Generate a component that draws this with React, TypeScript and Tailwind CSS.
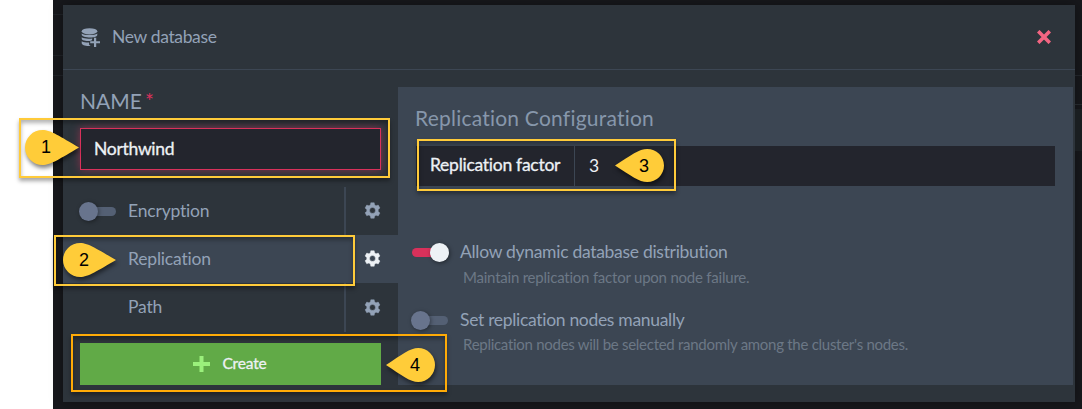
import React from "react";

function Gear({ className }: { className: string }) {
  return (
    <svg viewBox="0 0 24 24" className={className} fill="currentColor">
      <path fillRule="evenodd" d="M9.6 1h4.8l.7 3.2 1.9 1.1 3.1-1 2.4 4.2-2.4 2.2v2.6l2.4 2.2-2.4 4.2-3.1-1-1.9 1.1-.7 3.2H9.6l-.7-3.2L7 18.5l-3.1 1-2.4-4.2 2.4-2.2v-2.6L1.5 8.5l2.4-4.2 3.1 1 1.9-1.1zM12 7.800a4.1 4.1 0 1 0 0 8.200 4.1 4.1 0 0 0 0-8.200z" strokeWidth="0.6" stroke="currentColor" strokeLinejoin="round" />
    </svg>
  );
}

function DatabaseIcon() {
  return (
    <svg viewBox="0 0 19 19" className="h-[19px] w-[19px] shrink-0" fill="#93a2b7">
      <ellipse cx="8.5" cy="3.3" rx="7.8" ry="3.1" />
      <path d="M.7 5.4c2.800 2.200 12.800 2.200 15.600 0v1.300c0 1.800-3.200 2.800-6.800 2.800C4.600 9.500.7 8.500.7 6.500z" />
      <path d="M.7 9.200c2.300 1.500 6 1.700 10.600 1.200l-.3 1.800-2 .9C4.300 13.100.7 12.300.7 10.400z" />
      <path d="M.7 13.200c2 1.200 4.600 1.500 7.400 1.400v2.200l1.500 1.200C4.700 18.400.7 17.300.7 15.100z" />
      <path d="M13 9.800h2.200v3.500H19v2h-3.800V19H13v-3.700H9.200v-2H13z" />
    </svg>
  );
}

function Toggle({ on = false }: { on?: boolean }) {
  return (
    <span className={on ? "flex h-[19px] w-[37px] items-center justify-end rounded-full" : "flex h-[19px] w-[37px] items-center rounded-full"}>
      {on && <span className="-mr-2 h-[9px] w-[26px] rounded-full bg-[#d9315b]" />}
      <span className={on ? "z-10 h-[19px] w-[19px] rounded-full bg-[#edf1f5] shadow-[1px_1px_4px_rgba(0,0,0,0.45)]" : "z-10 h-[19px] w-[19px] rounded-full bg-[#68748d] shadow-[1px_1px_4px_rgba(0,0,0,0.4)]"} />
      {!on && <span className="-ml-2 h-[9px] w-[26px] rounded-full bg-[#546074]" />}
    </span>
  );
}

function Pin({ n, left = false, className }: { n: string; left?: boolean; className: string }) {
  return (
    <div className={`absolute ${className}`}>
      <svg viewBox="0 0 54 35" preserveAspectRatio="none" className="h-full w-full overflow-visible drop-shadow-[1px_3px_2px_rgba(0,0,0,0.5)]" fill="#ffcc39">
        <path
          transform={left ? "translate(54 0) scale(-1 1)" : undefined}
          d={left ? "M18.500 0C27.500 0 36 6.500 54 17.500C36 28.500 27.500 35 18.500 35A18.500 17.500 0 0 1 18.500 0Z" : "M17.500 0C26 0 35 6.500 54 17.500C35 28.500 26 35 17.500 35A17.500 17.500 0 0 1 17.500 0Z"}
        />
      </svg>
      <span className={`absolute top-0 font-['Liberation_Sans',sans-serif] text-[18px] leading-[35px] text-black ${left ? "right-[15px]" : "left-[16px]"}`}>{n}</span>
    </div>
  );
}

function Row({ label, active = false, toggle = false }: { label: string; active?: boolean; toggle?: boolean }) {
  return (
    <div className={active ? "flex h-12 bg-[#3c4653]" : "flex h-12 last:h-[49px]"}>
      <div className="flex flex-1 items-center pl-[16px]">
        <div className="w-[49px]">{toggle && <Toggle />}</div>
        <span className="text-[17.500px] tracking-[-0.180px] text-[#93a2b7] [font-variant-ligatures:none]">{label}</span>
      </div>
      <div className={active ? "flex w-[54px] items-center justify-center border-l-2 border-transparent text-[#edf1f5]" : "flex w-[54px] items-center justify-center border-l-2 border-[#3c4653] text-[#93a2b7]"}>
        <Gear className="mb-px ml-px h-[17px] w-[17px]" />
      </div>
    </div>
  );
}

export default function App() {
  return (
    <div className="relative h-[409px] w-[1082px] overflow-hidden bg-white pl-[53px] font-['Lato',sans-serif]">
      <div className="flex h-full bg-[#17181c]">
        <div className="flex w-[10px] shrink-0 flex-col">
          <div className="h-[15px] border-b border-[#202328]" />
          <div className="h-[41px] border-b border-[#202328]" />
          <div className="h-[20px] border-b border-[#202328]" />
        </div>
        <div className="mt-[5px] flex h-[397px] w-[1012px] shrink-0 flex-col bg-[#2d343b] shadow-[0_0_12px_rgba(0,0,0,0.35)]">
          <header className="flex h-[65px] items-center justify-between border-b border-[#3c4653] pr-[24px] pl-[18px]">
            <div className="flex items-center gap-[12px]">
              <DatabaseIcon />
              <span className="text-[17.500px] tracking-[-0.350px] text-[#93a2b7]">New database</span>
            </div>
            <svg viewBox="0 0 14 14" className="mb-px h-[14px] w-[14px]" stroke="#f36582" strokeWidth="3.600">
              <path d="M1.200 1.200 12.800 12.800M12.800 1.200 1.200 12.800" />
            </svg>
          </header>

          <div className="flex pt-[17px]">
            <aside className="flex w-[335px] flex-col">
              <div className="h-[41px] pl-[17px] text-[21px] leading-[28px] text-[#93a2b7]">
                NAME<span className="ml-[3px] text-[#d9315b]">*</span>
              </div>
              <div className="mr-[17px] ml-[17px] flex h-[42px] items-center border border-[#d9315b] bg-[#23252d] pl-[13px] text-[17.500px] tracking-[-0.300px] text-[#edf1f5] shadow-[0_0_8px_rgba(217,49,91,0.5)] [-webkit-text-stroke:0.3px_#edf1f5]">
                Northwind
              </div>
              <div className="mt-[17px]">
                <Row label="Encryption" toggle />
                <Row label="Replication" active />
                <Row label="Path" />
              </div>
              <button className="mt-[11px] ml-[17px] flex h-[42px] w-[301px] items-center justify-center gap-[12px] bg-[#61aa47] pr-px text-[15.500px] tracking-[-0.150px] text-[#edf1f5] [-webkit-text-stroke:0.3px_#edf1f5]">
                <svg viewBox="0 0 17 16" className="h-[16px] w-[17px]" fill="#9bf07c">
                  <path d="M6.500 0h4v6H17v4h-6.500v6h-4v-6H0V6h6.500z" />
                </svg>
                Create
              </button>
            </aside>

            <section className="h-[298px] w-[675px] bg-[#3c4653] pl-[14px]">
              <h2 className="pt-[16px] pl-[3px] text-[21px] leading-[30px] tracking-[0.220px] text-[#8797ab]">Replication Configuration</h2>
              <div className="mt-[13px] ml-[4px] flex h-[40px] w-[639px] items-center bg-[#23252d] text-[17.500px] text-[#edf1f5]">
                <span className="flex h-full w-[159px] items-center border-r border-[#3c4653] pb-[2px] pl-[14px] tracking-[-0.270px] [-webkit-text-stroke:0.3px_#edf1f5]">Replication factor</span>
                <span className="pl-[14px]">3</span>
              </div>
              <div className="mt-[56px] flex h-[20px] items-center gap-[11px] text-[17.500px] tracking-[-0.290px] text-[#93a2b7]">
                <Toggle on />
                Allow dynamic database distribution
              </div>
              <p className="mt-[5px] pl-[51px] text-[15px] leading-[20px] tracking-[-0.220px] text-[#6c7886]">Maintain replication factor upon node failure.</p>
              <div className="mt-[23px] flex h-[20px] items-center text-[17.500px] tracking-[-0.310px] text-[#93a2b7]">
                <span className="mr-[12px] -ml-px"><Toggle /></span>
                Set replication nodes manually
              </div>
              <p className="mt-[4px] pl-[51px] text-[15px] leading-[20px] tracking-[-0.280px] text-[#6c7886]">Replication nodes will be selected randomly among the cluster's nodes.</p>
            </section>
          </div>
        </div>
        <div className="flex flex-1 flex-col">
          <div className="h-[76px] border-b border-[#202328]" />
          <div className="h-[29px] border-b border-[#24282c]" />
          <div className="mt-[4px] h-[42px] bg-[#1a1e21]" />
        </div>
      </div>

      <div className="absolute top-[118px] left-[19px] h-[60px] w-[371px] border-2 border-[#ffcb3a] shadow-[0_3px_4px_rgba(0,0,0,0.35),inset_0_3px_4px_rgba(0,0,0,0.3)]" />
      <div className="absolute top-[235px] left-[54px] h-[51px] w-[301px] border-2 border-[#ffcb3a] shadow-[0_3px_4px_rgba(0,0,0,0.35),inset_0_3px_4px_rgba(0,0,0,0.3)]" />
      <div className="absolute top-[139px] left-[417px] h-[52px] w-[259px] border-2 border-[#ffcb3a] shadow-[0_3px_4px_rgba(0,0,0,0.35),inset_0_3px_4px_rgba(0,0,0,0.3)]" />
      <div className="absolute top-[334px] left-[71px] h-[58px] w-[376px] border-2 border-[#ffab07] shadow-[0_3px_4px_rgba(0,0,0,0.35),inset_0_3px_4px_rgba(0,0,0,0.3)]" />
      <Pin n="1" className="top-[130px] left-[25px] h-[35px] w-[54px]" />
      <Pin n="2" className="top-[243px] left-[63px] h-[34px] w-[53px]" />
      <Pin n="3" left className="top-[149px] left-[615px] h-[33px] w-[49px]" />
      <Pin n="4" left className="top-[348px] left-[386px] h-[34px] w-[49px]" />
    </div>
  );
}
